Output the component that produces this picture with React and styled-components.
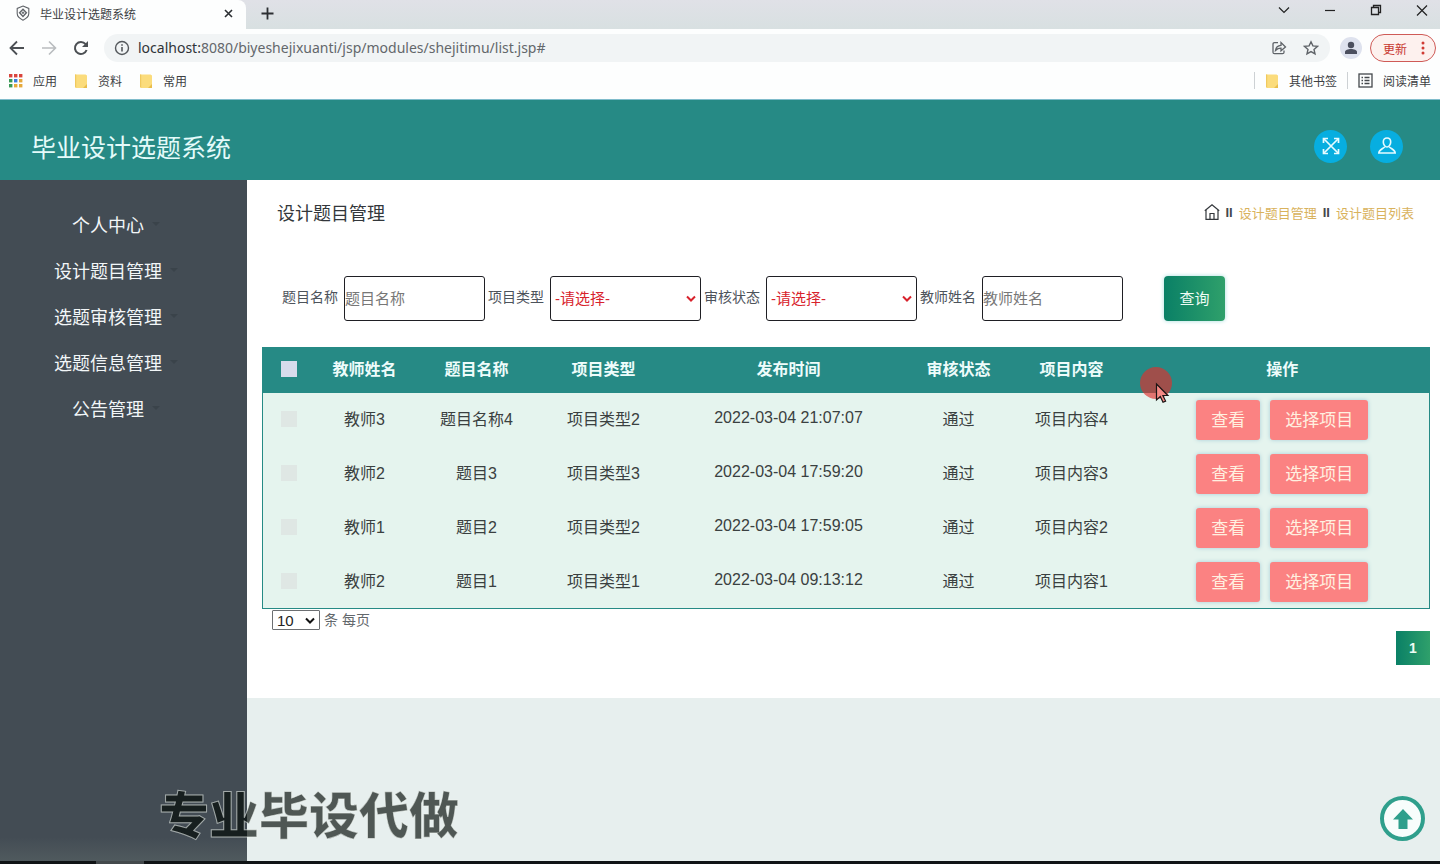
import React, { useState } from "react";
import styled, { createGlobalStyle } from "styled-components";

const menuItems = ["个人中心", "设计题目管理", "选题审核管理", "选题信息管理", "公告管理"];

const topics = [
  { id: 4, teacher: "教师3", name: "题目名称4", type: "项目类型2", time: "2022-03-04 21:07:07", status: "通过", content: "项目内容4" },
  { id: 3, teacher: "教师2", name: "题目3", type: "项目类型3", time: "2022-03-04 17:59:20", status: "通过", content: "项目内容3" },
  { id: 2, teacher: "教师1", name: "题目2", type: "项目类型2", time: "2022-03-04 17:59:05", status: "通过", content: "项目内容2" },
  { id: 1, teacher: "教师2", name: "题目1", type: "项目类型1", time: "2022-03-04 09:13:12", status: "通过", content: "项目内容1" },
];

const appColors = [
  "#d9453d", "#d9453d", "#d9453d",
  "#3a9a56", "#3b7ddd", "#e5a93b",
  "#3a9a56", "#e5a93b", "#e5a93b",
];

const FolderIcon = () => (
  <svg width="14" height="16" viewBox="0 0 14 16">
    <path d="M1 1.5h10.5l1.5 1V15H2.2L1 14z" fill="#fbdc7c" />
    <path d="M9 15l4-4v4z" fill="#e9bd4a" />
    <path d="M1 1.5h1.2V15L1 14z" fill="#f0c95e" />
  </svg>
);

const BrowserBar = () => (
  <Browser>
    <TabStrip>
      <Tab>
        <svg width="14" height="16" viewBox="0 0 14 16" fill="none" stroke="#5f6368" strokeWidth="1.1">
          <path d="M7 1l5.8 2.400v5.200c0 3-2.400 5-5.800 6.600C3.600 13.600 1.200 11.600 1.200 8.600V3.400z" />
          <path d="M7 4.200l3.400 3.600L7 11.400 3.600 7.800z" strokeWidth="1.400" />
          <path d="M7 6.500v2.600M5.700 7.800h2.600" />
        </svg>
        <span>毕业设计选题系统</span>
        <ChromeButton aria-label="关闭标签页">
          <svg width="9" height="9" viewBox="0 0 9 9" stroke="#2c2f33" strokeWidth="1.6">
            <path d="M1 1l7 7M8 1L1 8" />
          </svg>
        </ChromeButton>
      </Tab>
      <NewTab aria-label="新标签页">
        <svg width="13" height="13" viewBox="0 0 13 13" stroke="#2c2f33" strokeWidth="1.8">
          <path d="M6.500 0.500v12M0.500 6.500h12" />
        </svg>
      </NewTab>
      <WindowControls>
        <svg width="12" height="20" viewBox="0 0 12 20" fill="none" stroke="#222" strokeWidth="1.2">
          <path d="M1 7.500l5 5 5-5" />
        </svg>
        <svg width="12" height="20" viewBox="0 0 12 20" stroke="#222" strokeWidth="1.2">
          <path d="M1 10.500h10" />
        </svg>
        <svg width="12" height="20" viewBox="0 0 12 20" fill="none" stroke="#222" strokeWidth="1.3">
          <path d="M1.500 7.500h7v7h-7zM3.500 7.500v-2h7v7h-2" />
        </svg>
        <svg width="12" height="20" viewBox="0 0 12 20" stroke="#222" strokeWidth="1.2">
          <path d="M1 5.500l10 10M11 5.500l-10 10" />
        </svg>
      </WindowControls>
    </TabStrip>

    <Toolbar>
      <NavButtons>
        <ChromeButton aria-label="后退">
          <svg width="16" height="16" viewBox="0 0 16 16" fill="none" stroke="#4c5054" strokeWidth="1.8">
            <path d="M15 8H2M8 1.500L1.500 8 8 14.500" />
          </svg>
        </ChromeButton>
        <ChromeButton aria-label="前进">
          <svg width="16" height="16" viewBox="0 0 16 16" fill="none" stroke="#b9bcbf" strokeWidth="1.6">
            <path d="M1 8h13M8 1.500L14.500 8 8 14.500" />
          </svg>
        </ChromeButton>
        <ChromeButton aria-label="重新加载">
          <svg width="16" height="16" viewBox="0 0 16 16" fill="none" stroke="#4c5054" strokeWidth="2">
            <path d="M13.600 10A6 6 0 1 1 12.600 4.200" />
            <path d="M15 1v6H9z" fill="#4c5054" stroke="none" />
          </svg>
        </ChromeButton>
      </NavButtons>
      <AddressBar>
        <svg width="16" height="16" viewBox="0 0 16 16" fill="none" stroke="#54585c" strokeWidth="1.4">
          <circle cx="8" cy="8" r="6.500" />
          <path d="M8 7v4.500M8 4.300v1.500" strokeWidth="1.600" />
        </svg>
        <Url>
          localhost:<i>8080/biyeshejixuanti/jsp/modules/shejitimu/list.jsp#</i>
        </Url>
        <svg width="16" height="16" viewBox="0 0 16 16" fill="none" stroke="#5f6368" strokeWidth="1.300">
          <path d="M7 2.700H3.500q-1.500 0-1.500 1.500v8q0 1.500 1.500 1.500h8q1.500 0 1.500-1.500V10.500" />
          <path d="M4.500 10.500C5 7 7 5.500 10 5.300V2.500L14.500 7 10 10.800V8.200C7.500 8.200 6 9 4.500 10.500z" />
        </svg>
        <svg width="16" height="16" viewBox="0 0 16 16" fill="none" stroke="#5f6368" strokeWidth="1.400">
          <path d="M8 1.800l1.900 4.100 4.500.5-3.400 3 1 4.500L8 11.600l-4 2.300 1-4.500-3.400-3 4.500-.5z" />
        </svg>
      </AddressBar>
      <Avatar>
        <svg width="14" height="14" viewBox="0 0 14 14" fill="#4b4f5e">
          <circle cx="7" cy="4" r="3.200" />
          <path d="M1 13v-2c0-2 3-3 6-3s6 1 6 3v2z" />
        </svg>
      </Avatar>
      <UpdateButton>
        更新
        <svg width="4" height="14" viewBox="0 0 4 14" fill="#d03b33">
          <circle cx="2" cy="2" r="1.500" />
          <circle cx="2" cy="7" r="1.500" />
          <circle cx="2" cy="12" r="1.500" />
        </svg>
      </UpdateButton>
    </Toolbar>

    <Bookmarks>
      <Bookmark href="#">
        <svg width="14" height="14" viewBox="0 0 14 14">
          {appColors.map((color, i) => (
            <rect key={i} x={(i % 3) * 5} y={Math.floor(i / 3) * 5} width="3.400" height="3.400" fill={color} />
          ))}
        </svg>
        应用
      </Bookmark>
      <Bookmark href="#"><FolderIcon />资料</Bookmark>
      <Bookmark href="#"><FolderIcon />常用</Bookmark>
      <BookmarkEnd>
        <Bookmark href="#"><FolderIcon />其他书签</Bookmark>
        <Bookmark href="#">
          <svg width="15" height="15" viewBox="0 0 15 15" fill="none" stroke="#44484c" strokeWidth="1.300">
            <rect x="1" y="1" width="13" height="13" />
            <path d="M3.500 4.500h1.500M6.500 4.500h5M3.500 7.500h1.500M6.500 7.500h5M3.500 10.500h1.500M6.500 10.500h5" />
          </svg>
          阅读清单
        </Bookmark>
      </BookmarkEnd>
    </Bookmarks>
  </Browser>
);

const SelectField = ({ id, label }) => (
  <Field>
    <label htmlFor={id}>{label}</label>
    <SelectBox>
      <select id={id}>
        <option>-请选择-</option>
      </select>
      <svg width="12" height="8" viewBox="0 0 12 8" fill="none" stroke="#d8222c" strokeWidth="2">
        <path d="M2 1.500l4 4 4-4" />
      </svg>
    </SelectBox>
  </Field>
);

const TextField = ({ id, label }) => (
  <Field>
    <label htmlFor={id}>{label}</label>
    <input id={id} type="text" placeholder={label} />
  </Field>
);

const App = () => {
  const [checked, setChecked] = useState([]);

  const toggle = (id) => {
    setChecked((prev) => (prev.includes(id) ? prev.filter((el) => el !== id) : [...prev, id]));
  };

  const toggleAll = () => {
    setChecked((prev) => (prev.length === topics.length ? [] : topics.map((el) => el.id)));
  };

  return (
    <Wrapper>
      <GlobalStyle />
      <BrowserBar />

      <Header>
        <h1>毕业设计选题系统</h1>
        <RoundButton aria-label="全屏">
          <svg width="18" height="18" viewBox="0 0 18 18" fill="none" stroke="#e6fbff" strokeWidth="1.700">
            <path d="M2 2l14 14M16 2L2 16" />
            <path d="M1.500 6V1.500H6M12 1.500h4.500V6M16.500 12v4.500H12M6 16.500H1.500V12" />
          </svg>
        </RoundButton>
        <RoundButton aria-label="用户">
          <svg width="20" height="20" viewBox="0 0 20 20" fill="none" stroke="#e6fbff" strokeWidth="1.600">
            <path d="M10 2c2.300 0 3.700 1.600 3.700 4S12 11 10 11 6.300 8.400 6.300 6 7.700 2 10 2z" />
            <path d="M7.800 10.500C7.500 12.500 2 13 1.800 17h16.400c-.2-4-5.700-4.500-6-6.500" />
          </svg>
        </RoundButton>
      </Header>

      <Main>
        <Sidebar>
          {menuItems.map((item) => (
            <MenuLink href="#" key={item}>{item}</MenuLink>
          ))}
        </Sidebar>

        <Content>
          <Panel>
            <TitleRow>
              <h2>设计题目管理</h2>
              <Crumbs>
                <svg width="16" height="16" viewBox="0 0 16 16" fill="none" stroke="#33373b" strokeWidth="1.200">
                  <path d="M0.800 6.800L8 0.900l7.200 5.900" />
                  <path d="M2 6v9.300h12V6M6 15V9.500h4V15" />
                </svg>
                <b>II</b>
                <a href="#">设计题目管理</a>
                <b>II</b>
                <a href="#">设计题目列表</a>
              </Crumbs>
            </TitleRow>

            <SearchForm onSubmit={(e) => e.preventDefault()}>
              <TextField id="name" label="题目名称" />
              <SelectField id="type" label="项目类型" />
              <SelectField id="status" label="审核状态" />
              <TextField id="teacher" label="教师姓名" />
              <SearchBtn type="submit">查询</SearchBtn>
            </SearchForm>

            <StyledTable>
              <colgroup>
                <col width="53" />
                <col width="98" />
                <col width="126" />
                <col width="128" />
                <col width="242" />
                <col width="98" />
                <col width="128" />
                <col />
              </colgroup>
              <thead>
                <tr>
                  <th>
                    <Check
                      type="checkbox"
                      aria-label="全选"
                      $color="#d8dcec"
                      checked={checked.length === topics.length}
                      onChange={toggleAll}
                    />
                  </th>
                  <th>教师姓名</th>
                  <th>题目名称</th>
                  <th>项目类型</th>
                  <th>发布时间</th>
                  <th>审核状态</th>
                  <th>项目内容</th>
                  <th>操作</th>
                </tr>
              </thead>
              <tbody>
                {topics.map((el) => (
                  <tr key={el.id}>
                    <td>
                      <Check
                        type="checkbox"
                        aria-label={el.name}
                        $color="#dfe7e4"
                        checked={checked.includes(el.id)}
                        onChange={() => toggle(el.id)}
                      />
                    </td>
                    <td>{el.teacher}</td>
                    <td>{el.name}</td>
                    <td>{el.type}</td>
                    <td>{el.time}</td>
                    <td>{el.status}</td>
                    <td>{el.content}</td>
                    <td>
                      <ActionWrapper>
                        <ActionBtn>查看</ActionBtn>
                        <ActionBtn>选择项目</ActionBtn>
                      </ActionWrapper>
                    </td>
                  </tr>
                ))}
              </tbody>
            </StyledTable>

            <PageSize>
              <PageSelect>
                <select id="size">
                  <option>10</option>
                </select>
                <svg width="10" height="8" viewBox="0 0 10 8" fill="none" stroke="#111" strokeWidth="2">
                  <path d="M1 1.500l4 4 4-4" />
                </svg>
              </PageSelect>
              <label htmlFor="size">条 每页</label>
            </PageSize>
            <PaginationWrapper>
              <button>1</button>
            </PaginationWrapper>

            <Pointer width="34" height="38" viewBox="0 0 34 38">
              <circle cx="16" cy="16" r="16" fill="#e0302c" fillOpacity="0.650" />
              <path d="M16.500 17v16l3.800-3.500 2.700 5.800 2.600-1.200-2.700-5.600h5z" fill="#f58a86" stroke="#1b1414" strokeWidth="1.200" />
            </Pointer>
          </Panel>

          <TopButton aria-label="返回顶部">
            <svg width="20" height="20" viewBox="0 0 20 20" fill="#2f9f8c">
              <path d="M10 0l10 10.500h-5.500V20h-9v-9.500H0z" />
            </svg>
          </TopButton>
        </Content>
        <Watermark>专业毕设代做</Watermark>
      </Main>
      <Taskbar />
    </Wrapper>
  );
};

export default App;

/* ================== STYLES ================== */
const GlobalStyle = createGlobalStyle`
  * {
    box-sizing: border-box;
  }

  body {
    margin: 0;
    font-family: "Liberation Sans", "Noto Sans CJK SC", sans-serif;
  }

  button,
  input,
  select {
    font-family: inherit;
  }

  button {
    cursor: pointer;
  }

  a {
    text-decoration: none;
  }

  svg {
    flex: none;
  }
`;

const Wrapper = styled.div`
  min-height: 100vh;
  display: flex;
  flex-direction: column;
`;

/* browser */
const Browser = styled.div`
  background: #fdfefe;
  border-bottom: 1px solid #7fbccb;
  font-family: "Noto Sans CJK SC", sans-serif;
  font-size: 12px;
  color: #3c4043;
`;

const TabStrip = styled.div`
  display: flex;
  height: 29px;
  background: linear-gradient(#e0e1e7, #d8e0e1);
`;

const Tab = styled.div`
  display: flex;
  align-items: center;
  gap: 10px;
  width: 246px;
  padding: 0 9px 3px 16px;
  background: #fdfefe;
  border-radius: 0 8px 0 0;

  span {
    flex: 1;
  }
`;

const ChromeButton = styled.button`
  display: flex;
  align-items: center;
  justify-content: center;
  width: 17px;
  height: 17px;
  padding: 0;
  border: none;
  background: none;
`;

const NewTab = styled(ChromeButton)`
  width: 42px;
  height: 27px;
`;

const WindowControls = styled.div`
  display: flex;
  gap: 34px;
  margin-left: auto;
  padding-right: 12px;
`;

const Toolbar = styled.div`
  display: flex;
  align-items: center;
  height: 38px;
  padding: 0 4px 0 8px;
`;

const NavButtons = styled.div`
  display: flex;
  gap: 15px;
  width: 96px;
`;

const AddressBar = styled.div`
  flex: 1;
  display: flex;
  align-items: center;
  gap: 16px;
  height: 28px;
  padding: 0 11px 0 10px;
  border-radius: 14px;
  background: #f1f4f5;
`;

const Url = styled.span`
  flex: 1;
  margin-left: -8px;
  padding-bottom: 1px;
  font-family: "Noto Sans", sans-serif;
  font-size: 14px;
  color: #2f3337;

  i {
    font-style: normal;
    color: #63676b;
  }
`;

const Avatar = styled.div`
  display: flex;
  align-items: center;
  justify-content: center;
  width: 22px;
  height: 22px;
  margin: 0 8px 0 10px;
  border-radius: 50%;
  background: #dee2ee;
`;

const UpdateButton = styled.button`
  display: flex;
  align-items: center;
  gap: 14px;
  height: 28px;
  padding: 0 10px 0 12px;
  border: 1px solid #cf5a56;
  border-radius: 14px;
  background: #fdf1ee;
  color: #c8372f;
  font-size: 12px;
`;

const Bookmarks = styled.div`
  display: flex;
  align-items: center;
  gap: 17px;
  height: 32px;
  padding: 0 9px 5px 9px;
`;

const Bookmark = styled.a`
  display: flex;
  align-items: center;
  gap: 10px;
  color: #3c4043;
`;

const BookmarkEnd = styled.div`
  display: flex;
  margin-left: auto;

  a {
    padding-left: 10px;
    margin-left: 10px;
    border-left: 1px solid #cdd1d4;
  }
`;

/* page */
const Header = styled.header`
  display: flex;
  align-items: center;
  gap: 23px;
  height: 80px;
  padding: 0 37px 0 31px;
  background: #268a85;

  h1 {
    flex: 1;
    margin: 16px 0 0;
    color: #e4fbfa;
    font-size: 25px;
    font-weight: 400;
    line-height: 36px;
  }
`;

const RoundButton = styled.button`
  display: flex;
  align-items: center;
  justify-content: center;
  width: 33px;
  height: 33px;
  margin-top: 12px;
  padding: 0;
  border: none;
  border-radius: 50%;
  background: #07aee0;
`;

const Main = styled.div`
  position: relative;
  flex: 1;
  display: flex;
`;

const Sidebar = styled.nav`
  flex: 0 0 247px;
  display: flex;
  flex-direction: column;
  gap: 10px;
  padding: 26px 31px 0 0;
  background: linear-gradient(to top, #505a5e, #434c54 24px);
`;

const MenuLink = styled.a`
  display: flex;
  align-items: center;
  justify-content: center;
  height: 36px;
  color: #f2f6f8;
  font-size: 18px;

  &::after {
    content: "";
    margin: 0 -16px 0 8px;
    border: 4px solid transparent;
    border-top-color: #3a434a;
    border-bottom: none;
  }
`;

const Content = styled.main`
  flex: 1;
  background: #e7efee;
`;

const Panel = styled.section`
  position: relative;
  padding: 16px 10px 33px 15px;
  background: #fff;
`;

const TitleRow = styled.div`
  display: flex;
  align-items: center;
  justify-content: space-between;
  padding: 0 16px 0 15px;

  h2 {
    margin: 0;
    color: #33373b;
    font-size: 18px;
    font-weight: 400;
    line-height: 36px;
  }
`;

const Crumbs = styled.div`
  display: flex;
  align-items: center;
  gap: 6px;
  padding-bottom: 4px;
  font-size: 13px;

  a {
    color: #d9b25c;
  }

  b {
    color: #44484c;
  }
`;

const SearchForm = styled.form`
  display: flex;
  gap: 3px;
  margin: 44px 0 26px;
  padding-left: 20px;
`;

const Field = styled.div`
  display: flex;
  align-items: center;
  gap: 6px;

  label {
    padding-bottom: 5px;
    color: #4d535b;
    font-size: 14px;
  }

  input,
  select {
    width: 141px;
    height: 45px;
    padding: 0;
    border: 1px solid #1f1f24;
    border-radius: 3px;
    background: #fff;
    font-size: 15px;
  }

  input::placeholder {
    color: #777;
  }

  select {
    width: 151px;
    padding-left: 4px;
    color: #d8222c;
    appearance: none;
  }
`;

const SelectBox = styled.div`
  position: relative;
  display: flex;

  svg {
    position: absolute;
    right: 4px;
    top: 19px;
    pointer-events: none;
  }
`;

const SearchBtn = styled.button`
  width: 61px;
  height: 45px;
  margin-left: 38px;
  padding: 0 0 2px;
  border: none;
  border-radius: 4px;
  background: linear-gradient(90deg, #0a8066, #2fa06b);
  box-shadow: 0 0 4px #a5dcdc;
  color: #eefcf4;
  font-size: 15px;
`;

const StyledTable = styled.table`
  width: 100%;
  table-layout: fixed;
  border-collapse: collapse;
  border: 1px solid #268a85;
  color: #3a4040;
  font-size: 16px;
  text-align: center;

  th {
    height: 45px;
    padding: 0 0 4px;
    background: #268a85;
    color: #eefcfb;
    font-weight: 700;
  }

  td {
    height: 54px;
    padding: 0 0 3px;
    background: #e5f4ee;
  }
`;

const Check = styled.input`
  width: 16px;
  height: 16px;
  margin: 0;
  appearance: none;
  background: ${(props) => props.$color};
  vertical-align: middle;

  &:checked {
    background: #268a85;
    outline: 1px solid #fff;
  }
`;

const ActionWrapper = styled.div`
  display: flex;
  justify-content: center;
  gap: 10px;
  padding-top: 4px;
`;

const ActionBtn = styled.button`
  height: 40px;
  padding: 0 15px 3px;
  border: none;
  border-radius: 3px;
  background: #fb8282;
  box-shadow: 0 0 4px #a8cfd8;
  color: #fff0e0;
  font-size: 17px;
`;

const PageSize = styled.div`
  display: flex;
  align-items: center;
  gap: 4px;
  height: 22px;
  padding-left: 10px;
  color: #63686c;
  font-size: 14px;

  label {
    padding-bottom: 2px;
  }
`;

const PageSelect = styled.div`
  position: relative;
  display: flex;

  select {
    width: 48px;
    height: 20px;
    padding: 0 4px;
    border: 1px solid #6c6f72;
    border-radius: 1px;
    background: #fff;
    color: #222;
    font-size: 15px;
    appearance: none;
  }

  svg {
    position: absolute;
    right: 5px;
    top: 7px;
    pointer-events: none;
  }
`;

const PaginationWrapper = styled.div`
  display: flex;
  justify-content: flex-end;

  button {
    width: 34px;
    height: 34px;
    padding: 0;
    border: none;
    background: linear-gradient(90deg, #0a8066, #2fa06b);
    color: #eefcf4;
    font-size: 14px;
    font-weight: 700;
  }
`;

/* pointer with its click highlight, drawn over the table */
const Pointer = styled.svg`
  position: absolute;
  right: 266px;
  top: 187px;
  pointer-events: none;
`;

const TopButton = styled.button`
  position: absolute;
  right: 15px;
  bottom: 20px;
  display: flex;
  align-items: center;
  justify-content: center;
  width: 45px;
  height: 45px;
  padding: 0;
  border: 4px solid #2f9f8c;
  border-radius: 50%;
  background: #f8fdfc;
`;

const Watermark = styled.div`
  position: absolute;
  left: 159px;
  bottom: 8px;
  color: rgba(0, 8, 4, 0.66);
  font-size: 50px;
  font-weight: 900;
  line-height: 72px;
  -webkit-text-stroke: 1px rgba(240, 246, 242, 0.6);
  pointer-events: none;
`;

const Taskbar = styled.div`
  height: 3px;
  background: linear-gradient(90deg, #101416 96px, #43494c 96px, #43494c 144px, #101416 144px);
`;
